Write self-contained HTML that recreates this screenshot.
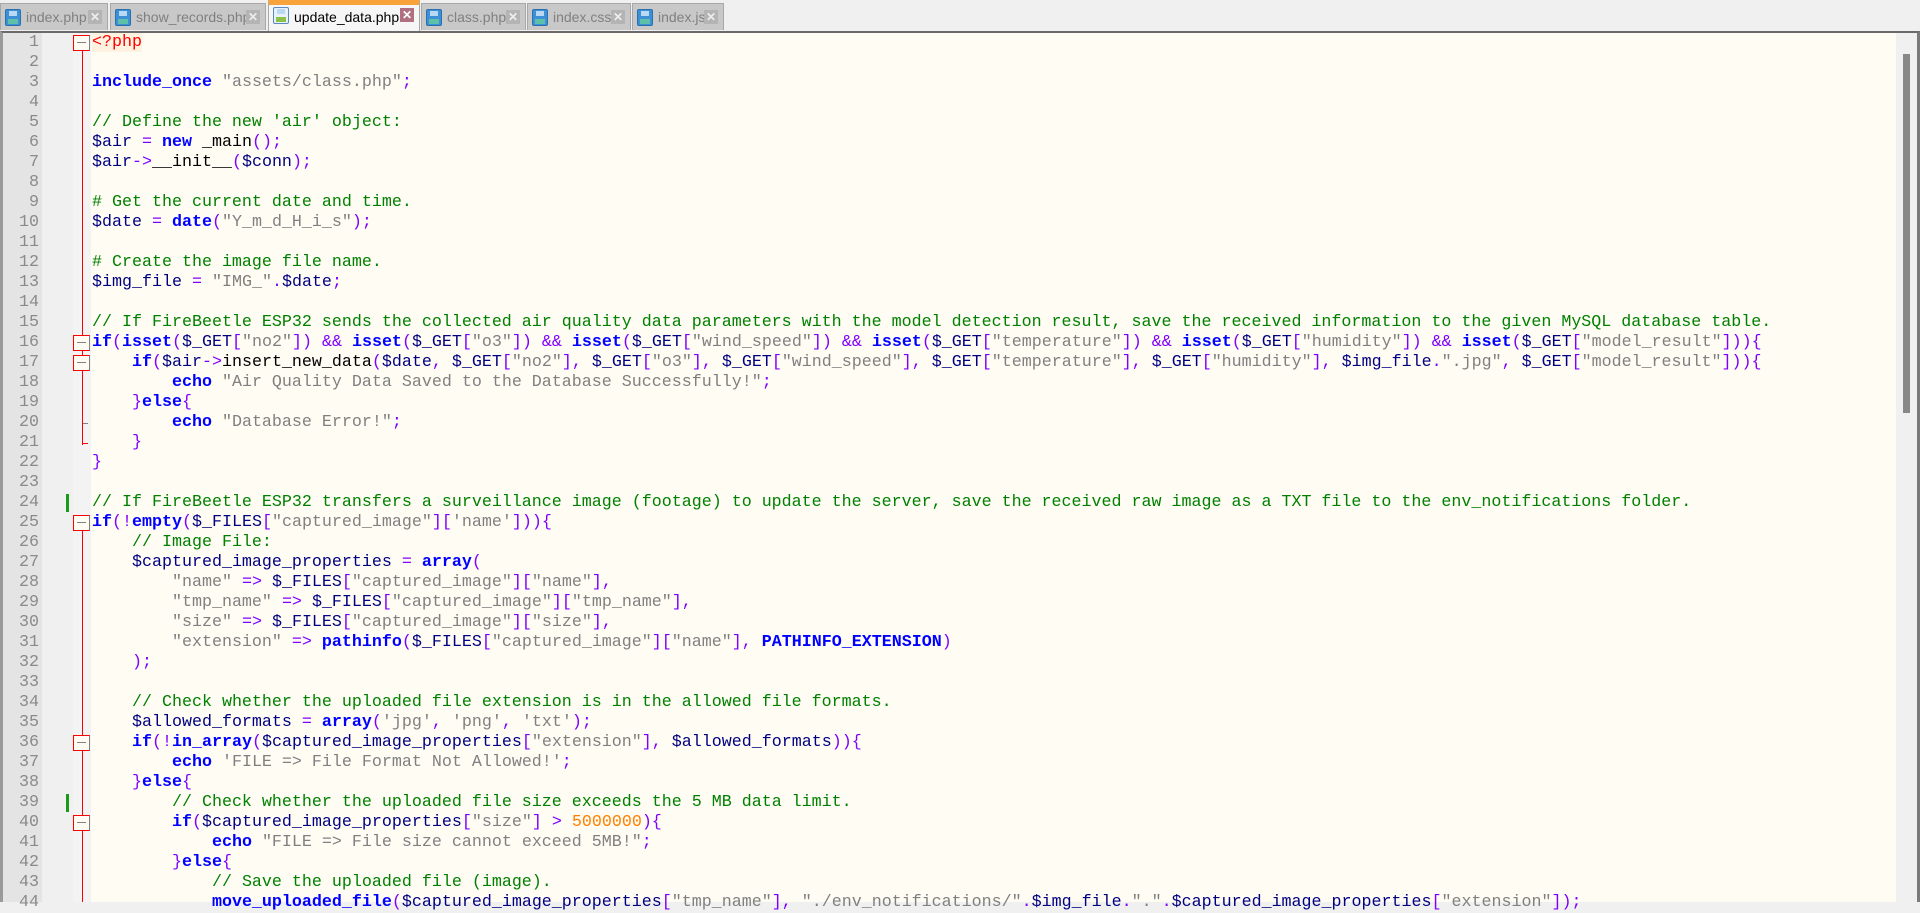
<!DOCTYPE html>
<html><head><meta charset="utf-8"><style>
*{margin:0;padding:0;box-sizing:border-box}
body{width:1920px;height:902px;overflow:hidden;background:#f0f0f0;position:relative;font-family:"Liberation Sans",sans-serif}
.tab{position:absolute;top:3px;height:27px;background:#c8c8c8;border:1px solid #a8a8a8;border-bottom:none;font-size:14px;color:#808080;line-height:26px;padding-left:25px;white-space:nowrap;overflow:hidden}
.tab.act{top:0;height:31px;background:#f6f6f6;color:#000;border-top:5px solid #f7a23a;line-height:25px}
.ico{position:absolute;left:4px;top:5px;width:16px;height:17px;background:#3d8fd6;border:1px solid #2a6fb0;border-radius:2px}
.ico:before{content:"";position:absolute;left:3px;top:1px;width:8px;height:5px;background:#b8d8f4}
.ico:after{content:"";position:absolute;left:2px;bottom:1px;width:10px;height:5px;background:#5ec0a8}
.act .ico{background:#e8f0fa;border-color:#5a8ac0}
.act .ico:after{background:#8bc34a}
.x{position:absolute;right:5px;top:6px;width:14px;height:14px;background:#b4b4b4;color:#eee;font-size:12px;line-height:14px;text-align:center;font-weight:bold}
.act .x{background:#b07080;color:#fff}
#ed{position:absolute;left:0;top:31px;width:1920px;height:871px;background:#fffcf4;border-top:2px solid #6a6a6a;border-left:3px solid #9a9a9a;border-right:3px solid #7a7a7a}
#ln{position:absolute;left:3px;top:33px;width:39px;height:869px;background:#e4e4e4}
#mg{position:absolute;left:42px;top:33px;width:31px;height:869px;background:#f0f0f0}
#fm{position:absolute;left:73px;top:33px;width:18px;height:869px;background:#f3f3f3}
pre{font-family:"Liberation Mono",monospace;font-size:16.67px;line-height:20px;position:absolute}
#nums{left:3px;top:33px;width:36px;text-align:right;color:#8a8a8a}
#code{left:92px;top:33px;color:#000}
.k{color:#0000ff;font-weight:bold}.s{color:#808080}.o{color:#8000ff}.v{color:#000080}.c{color:#008000}.n{color:#ff8000}
.ph{color:#ff0000;background:#fdf3e0}
.fl{position:absolute;left:82px;width:1px;background:#ff0000}
.fb{position:absolute;left:73px;width:17px;height:16px;border:1px solid #ff0000;border-right-color:#808080;background:#fffcf4}
.fb:after{content:"";position:absolute;left:3px;top:6px;width:9px;height:1px;background:#808080}
.tk{position:absolute;left:82px;width:8px;height:1px;background:#ff0000}
.gm{position:absolute;left:66px;width:3px;height:18px;background:#1a9a1a}
#sb{position:absolute;left:1896px;top:33px;width:21px;height:869px;background:#f0f0f0}
#th{position:absolute;left:1903px;top:54px;width:7px;height:359px;background:#888}
</style></head><body>
<div class="tab" style="left:0;width:108px"><span class="ico"></span>index.php<span class="x">✕</span></div>
<div class="tab" style="left:110px;width:156px"><span class="ico"></span>show_records.php<span class="x">✕</span></div>
<div class="tab act" style="left:268px;width:152px"><span class="ico" style="top:2px"></span>update_data.php<span class="x" style="top:3px">✕</span></div>
<div class="tab" style="left:421px;width:105px"><span class="ico"></span>class.php<span class="x">✕</span></div>
<div class="tab" style="left:527px;width:104px"><span class="ico"></span>index.css<span class="x">✕</span></div>
<div class="tab" style="left:632px;width:92px"><span class="ico"></span>index.js<span class="x">✕</span></div>
<div id="ed"></div>
<div id="ln"></div><div id="mg"></div><div id="fm"></div>
<div id="sb"></div><div id="th"></div>
<div class="fl" style="top:51px;height:394px"></div>
<div class="tk" style="top:443px;width:6px"></div>
<div class="tk" style="top:423px;left:83px;width:5px;background:#808080"></div>
<div class="fl" style="top:531px;height:371px"></div>
<div class="fb" style="top:35px"></div>
<div class="fb" style="top:335px"></div>
<div class="fb" style="top:355px"></div>
<div class="fb" style="top:515px"></div>
<div class="fb" style="top:735px"></div>
<div class="fb" style="top:815px"></div>
<div class="gm" style="top:494px"></div>
<div class="gm" style="top:794px"></div>
<pre id="nums">1
2
3
4
5
6
7
8
9
10
11
12
13
14
15
16
17
18
19
20
21
22
23
24
25
26
27
28
29
30
31
32
33
34
35
36
37
38
39
40
41
42
43
44</pre>
<pre id="code"><span class="ph">&lt;?php</span>

<span class="k">include_once</span> <span class="s">"assets/class.php"</span><span class="o">;</span>

<span class="c">// Define the new 'air' object:</span>
<span class="v">$air</span> <span class="o">=</span> <span class="k">new</span> _main<span class="o">();</span>
<span class="v">$air</span><span class="o">-&gt;</span>__init__<span class="o">(</span><span class="v">$conn</span><span class="o">);</span>

<span class="c"># Get the current date and time.</span>
<span class="v">$date</span> <span class="o">=</span> <span class="k">date</span><span class="o">(</span><span class="s">"Y_m_d_H_i_s"</span><span class="o">);</span>

<span class="c"># Create the image file name.</span>
<span class="v">$img_file</span> <span class="o">=</span> <span class="s">"IMG_"</span><span class="o">.</span><span class="v">$date</span><span class="o">;</span>

<span class="c">// If FireBeetle ESP32 sends the collected air quality data parameters with the model detection result, save the received information to the given MySQL database table.</span>
<span class="k">if</span><span class="o">(</span><span class="k">isset</span><span class="o">(</span><span class="v">$_GET</span><span class="o">[</span><span class="s">"no2"</span><span class="o">])</span> <span class="o">&amp;&amp;</span> <span class="k">isset</span><span class="o">(</span><span class="v">$_GET</span><span class="o">[</span><span class="s">"o3"</span><span class="o">])</span> <span class="o">&amp;&amp;</span> <span class="k">isset</span><span class="o">(</span><span class="v">$_GET</span><span class="o">[</span><span class="s">"wind_speed"</span><span class="o">])</span> <span class="o">&amp;&amp;</span> <span class="k">isset</span><span class="o">(</span><span class="v">$_GET</span><span class="o">[</span><span class="s">"temperature"</span><span class="o">])</span> <span class="o">&amp;&amp;</span> <span class="k">isset</span><span class="o">(</span><span class="v">$_GET</span><span class="o">[</span><span class="s">"humidity"</span><span class="o">])</span> <span class="o">&amp;&amp;</span> <span class="k">isset</span><span class="o">(</span><span class="v">$_GET</span><span class="o">[</span><span class="s">"model_result"</span><span class="o">])){</span>
    <span class="k">if</span><span class="o">(</span><span class="v">$air</span><span class="o">-&gt;</span>insert_new_data<span class="o">(</span><span class="v">$date</span><span class="o">,</span> <span class="v">$_GET</span><span class="o">[</span><span class="s">"no2"</span><span class="o">],</span> <span class="v">$_GET</span><span class="o">[</span><span class="s">"o3"</span><span class="o">],</span> <span class="v">$_GET</span><span class="o">[</span><span class="s">"wind_speed"</span><span class="o">],</span> <span class="v">$_GET</span><span class="o">[</span><span class="s">"temperature"</span><span class="o">],</span> <span class="v">$_GET</span><span class="o">[</span><span class="s">"humidity"</span><span class="o">],</span> <span class="v">$img_file</span><span class="o">.</span><span class="s">".jpg"</span><span class="o">,</span> <span class="v">$_GET</span><span class="o">[</span><span class="s">"model_result"</span><span class="o">])){</span>
        <span class="k">echo</span> <span class="s">"Air Quality Data Saved to the Database Successfully!"</span><span class="o">;</span>
    <span class="o">}</span><span class="k">else</span><span class="o">{</span>
        <span class="k">echo</span> <span class="s">"Database Error!"</span><span class="o">;</span>
    <span class="o">}</span>
<span class="o">}</span>

<span class="c">// If FireBeetle ESP32 transfers a surveillance image (footage) to update the server, save the received raw image as a TXT file to the env_notifications folder.</span>
<span class="k">if</span><span class="o">(!</span><span class="k">empty</span><span class="o">(</span><span class="v">$_FILES</span><span class="o">[</span><span class="s">"captured_image"</span><span class="o">][</span><span class="s">'name'</span><span class="o">])){</span>
    <span class="c">// Image File:</span>
    <span class="v">$captured_image_properties</span> <span class="o">=</span> <span class="k">array</span><span class="o">(</span>
        <span class="s">"name"</span> <span class="o">=&gt;</span> <span class="v">$_FILES</span><span class="o">[</span><span class="s">"captured_image"</span><span class="o">][</span><span class="s">"name"</span><span class="o">],</span>
        <span class="s">"tmp_name"</span> <span class="o">=&gt;</span> <span class="v">$_FILES</span><span class="o">[</span><span class="s">"captured_image"</span><span class="o">][</span><span class="s">"tmp_name"</span><span class="o">],</span>
        <span class="s">"size"</span> <span class="o">=&gt;</span> <span class="v">$_FILES</span><span class="o">[</span><span class="s">"captured_image"</span><span class="o">][</span><span class="s">"size"</span><span class="o">],</span>
        <span class="s">"extension"</span> <span class="o">=&gt;</span> <span class="k">pathinfo</span><span class="o">(</span><span class="v">$_FILES</span><span class="o">[</span><span class="s">"captured_image"</span><span class="o">][</span><span class="s">"name"</span><span class="o">],</span> <span class="k">PATHINFO_EXTENSION</span><span class="o">)</span>
    <span class="o">);</span>

    <span class="c">// Check whether the uploaded file extension is in the allowed file formats.</span>
    <span class="v">$allowed_formats</span> <span class="o">=</span> <span class="k">array</span><span class="o">(</span><span class="s">'jpg'</span><span class="o">,</span> <span class="s">'png'</span><span class="o">,</span> <span class="s">'txt'</span><span class="o">);</span>
    <span class="k">if</span><span class="o">(!</span><span class="k">in_array</span><span class="o">(</span><span class="v">$captured_image_properties</span><span class="o">[</span><span class="s">"extension"</span><span class="o">],</span> <span class="v">$allowed_formats</span><span class="o">)){</span>
        <span class="k">echo</span> <span class="s">'FILE =&gt; File Format Not Allowed!'</span><span class="o">;</span>
    <span class="o">}</span><span class="k">else</span><span class="o">{</span>
        <span class="c">// Check whether the uploaded file size exceeds the 5 MB data limit.</span>
        <span class="k">if</span><span class="o">(</span><span class="v">$captured_image_properties</span><span class="o">[</span><span class="s">"size"</span><span class="o">]</span> <span class="o">&gt;</span> <span class="n">5000000</span><span class="o">){</span>
            <span class="k">echo</span> <span class="s">"FILE =&gt; File size cannot exceed 5MB!"</span><span class="o">;</span>
        <span class="o">}</span><span class="k">else</span><span class="o">{</span>
            <span class="c">// Save the uploaded file (image).</span>
            <span class="k">move_uploaded_file</span><span class="o">(</span><span class="v">$captured_image_properties</span><span class="o">[</span><span class="s">"tmp_name"</span><span class="o">],</span> <span class="s">"./env_notifications/"</span><span class="o">.</span><span class="v">$img_file</span><span class="o">.</span><span class="s">"."</span><span class="o">.</span><span class="v">$captured_image_properties</span><span class="o">[</span><span class="s">"extension"</span><span class="o">]);</span></pre>
</body></html>
